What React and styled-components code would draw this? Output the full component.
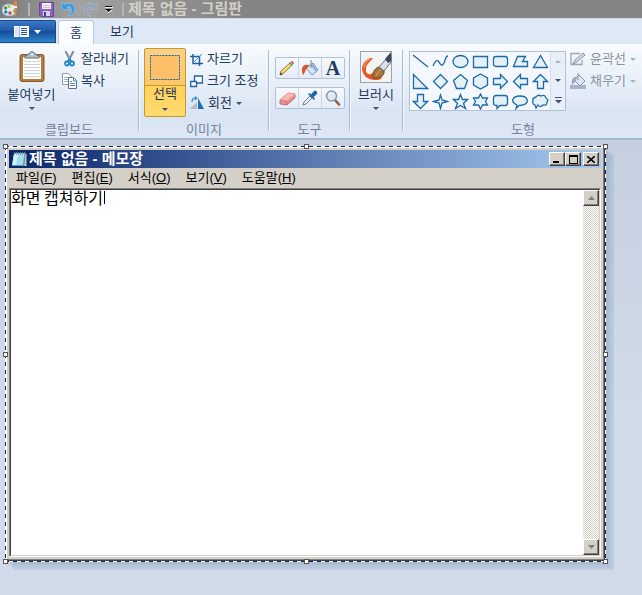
import styled, { createGlobalStyle, css } from 'styled-components';

const GlobalStyle = createGlobalStyle`
  * {
    box-sizing: border-box;
  }
  body {
    margin: 0;
    font-family: 'Liberation Sans', 'Noto Sans CJK KR', sans-serif;
    font-size: 13px;
    line-height: 16px;
    color: #1e395b;
  }
  button {
    font: inherit;
    color: inherit;
    padding: 0;
    border: none;
    background: none;
    white-space: nowrap;
  }
  svg {
    display: block;
    flex: none;
  }
`;

const Page = styled.div`
  display: flex;
  flex-direction: column;
  min-height: 100vh;
  overflow: hidden;
  background: #d0dae8;
`;

/* Paint title bar and tabs */
const TitleBar = styled.header`
  display: flex;
  align-items: center;
  height: 18px;
  padding-left: 2px;
  background: linear-gradient(90deg, #7c7c7c, #a2a2a2 80px, #848484 240px);
`;

const QuickAccess = styled.div`
  display: flex;
  align-items: center;
  gap: 7px;
  margin: 0 4px 0 10px;
  padding: 0 9px;
  border-left: 2px solid #b5b5b5;
  border-right: 2px solid #b5b5b5;
  height: 13px;
`;

const PaintTitle = styled.h1`
  margin: 0;
  font-size: 15px;
  font-weight: bold;
  line-height: 18px;
  color: #d4d0c8;
`;

const TabBar = styled.nav`
  display: flex;
  height: 26px;
  padding-top: 1px;
  background: #dfe8f5;
  border-top: 1px solid #cfd8e5;
`;

const FileButton = styled.button`
  display: flex;
  align-items: center;
  justify-content: center;
  gap: 5px;
  width: 56px;
  height: 23px;
  margin-right: 2px;
  border: 1px solid #1c4a8c;
  border-left: none;
  border-radius: 0 2px 0 0;
  background: linear-gradient(#3a78c3, #205ba9 45%, #174c99 50%, #2d86cb);
`;

const Tab = styled.button`
  padding: 0 16px;
  height: 24px;
  ${(props) =>
    props.$active &&
    css`
      padding: 0 11px;
      border: 1px solid #bac9db;
      border-bottom: none;
      border-radius: 3px 3px 0 0;
      background: #fafdff;
    `}
`;

/* Ribbon */
const Ribbon = styled.section`
  display: flex;
  background: linear-gradient(#f8fbfe, #e6eef8 45%, #d9e4f3 75%, #dde7f5);
  border-bottom: 2px solid #a3b8cf;
`;

const Group = styled.div`
  display: flex;
  flex-direction: column;
  flex: ${(props) => (props.$grow ? 1 : 'none')};
  width: ${(props) => props.$width || 'auto'};
  padding-top: 4px;
`;

const GroupBody = styled.div`
  display: flex;
  gap: 4px;
  min-height: 74px;
  padding: 0 5px;
`;

const GroupLabel = styled.div`
  text-align: center;
  color: #738399;
`;

const Divider = styled.div`
  width: 2px;
  margin: 6px 0 7px;
  background: #a9bcd4;
  border-right: 1px solid #f4f8fd;
`;

const BigButton = styled.button`
  display: flex;
  flex-direction: column;
  align-items: center;
  gap: 4px;
  width: ${(props) => props.$width};
  height: 69px;
  padding-top: 3px;
`;

const SelectButton = styled(BigButton)`
  gap: 6px;
  margin-left: -1px;
  border: 1px solid #c29b29;
  border-radius: 2px;
  background: linear-gradient(#fbd28a, #fdc769 36px, #c29b29 36px, #c29b29 37px, #ffd05c 37px, #ffdb70);
  padding-top: 6px;
`;

const CommandList = styled.div`
  display: flex;
  flex-direction: column;
`;

const Command = styled.button`
  display: flex;
  align-items: center;
  gap: 4px;
  height: 22px;
  color: ${(props) => (props.disabled ? '#8d93a0' : '#1e395b')};
`;

const ToolRows = styled.div`
  display: flex;
  flex-direction: column;
  gap: 8px;
  padding-top: 9px;
`;

const ToolRow = styled.div`
  display: flex;
  border: 1px solid #b1c0d6;
  border-radius: 2px;
  background: linear-gradient(#f6f9fd, #e4ecf7);
`;

const Tool = styled.button`
  display: flex;
  align-items: center;
  justify-content: center;
  width: 22px;
  height: 20px;
  & + & {
    width: 23px;
    border-left: 1px solid #c8d4e5;
  }
`;

const Letter = styled.span`
  font: bold 20px / 20px 'Liberation Serif', serif;
  color: #1f3a5f;
`;

const Gallery = styled.div`
  display: flex;
  height: 60px;
  margin-top: 3px;
  border: 1px solid #b1c0d6;
  background: #f4f7fc;
`;

const ShapeGrid = styled.div`
  display: grid;
  grid-template-columns: repeat(7, 20px);
  grid-template-rows: repeat(3, 20px);
  margin-top: -1px;
`;

const Shape = styled.button`
  display: flex;
  align-items: center;
  justify-content: center;
`;

const GalleryScroll = styled.div`
  display: flex;
  flex-direction: column;
  width: 15px;
  border-left: 1px solid #d3dcea;
  background: #e9eff8;
`;

const GalleryArrow = styled.button`
  display: flex;
  align-items: center;
  justify-content: center;
  flex: 1;
`;

/* Canvas with the pasted notepad window */
const Workspace = styled.main`
  display: flex;
  flex: 1;
  padding: 6px 36px 33px 5px;
  background: linear-gradient(#c5cfe0, #d0dae8 60%);
`;

const dash = '#0a246a 0 4px, #fff 4px 8px';

const Selection = styled.div`
  position: relative;
  display: flex;
  flex: 1;
  padding: 1px;
  background:
    repeating-linear-gradient(90deg, ${dash}) top / 100% 1px no-repeat,
    repeating-linear-gradient(90deg, ${dash}) bottom / 100% 1px no-repeat,
    repeating-linear-gradient(${dash}) left / 1px 100% no-repeat,
    repeating-linear-gradient(${dash}) right / 1px 100% no-repeat;
  box-shadow:
    2px 2px 0 rgba(130, 155, 190, 0.12),
    4px 4px 0 rgba(130, 155, 190, 0.12),
    6px 6px 0 rgba(130, 155, 190, 0.12),
    8px 8px 0 rgba(130, 155, 190, 0.2);
`;

const Handle = styled.span`
  position: absolute;
  left: ${(props) => props.$x};
  top: ${(props) => props.$y};
  width: 5px;
  height: 5px;
  margin: -2px;
  border: 1px solid #555;
  background: #fff;
`;

const Notepad = styled.article`
  display: flex;
  flex-direction: column;
  flex: 1;
  padding: 2px 3px 3px 2px;
  border: 1px solid;
  border-color: #fff #404040 #404040 #fff;
  box-shadow: inset -1px -1px 0 #808080;
  background: #d4d0c8;
  color: #000;
`;

const NotepadTitle = styled.div`
  display: flex;
  align-items: center;
  height: 18px;
  padding: 0 2px;
  background: linear-gradient(90deg, #0a246a, #a6caf0);
`;

const NotepadName = styled.h2`
  flex: 1;
  margin: 0 0 0 2px;
  font-size: 15px;
  line-height: 18px;
  color: #fff;
`;

const raised = css`
  border: 1px solid;
  border-color: #fff #404040 #404040 #fff;
  box-shadow: inset -1px -1px 0 #808080;
  background: #d4d0c8;
`;

const WindowButton = styled.button`
  ${raised}
  display: flex;
  align-items: center;
  justify-content: center;
  width: 16px;
  height: 14px;
  margin-left: ${(props) => (props.$apart ? '2px' : 0)};
`;

const MenuBar = styled.div`
  display: flex;
  gap: 15px;
  height: 20px;
  padding-left: 7px;
`;

const MenuItem = styled.button`
  line-height: 18px;
`;

const Editor = styled.div`
  position: relative;
  display: flex;
  flex: 1;
  border: 1px solid;
  border-color: #808080 #fff #fff #808080;
`;

const TextArea = styled.textarea`
  flex: 1;
  min-width: 0;
  padding: 0;
  border: 1px solid;
  border-color: #404040 transparent #d4d0c8 #404040;
  border-right: none;
  outline: none;
  resize: none;
  overflow: hidden;
  background: #fff;
  color: #000;
  font: 16px / 14px 'Noto Sans CJK KR', sans-serif;
`;

const Caret = styled.span`
  position: absolute;
  left: 94px;
  top: 2px;
  width: 1px;
  height: 13px;
  background: #000;
`;

const ScrollBar = styled.div`
  display: flex;
  flex-direction: column;
  justify-content: space-between;
  width: 17px;
  border: 1px solid #d4d0c8;
  border-top-color: #404040;
  border-left: none;
  background: repeating-conic-gradient(#d4d0c8 0 25%, #fff 0 50%) 0 0 / 2px 2px;
`;

const ScrollButton = styled.button`
  ${raised}
  display: flex;
  align-items: center;
  justify-content: center;
  height: 16px;
`;

function Arrow({ color = '#3c5470', up, size = 6 }) {
  const h = Math.ceil(size / 2);
  const d = up ? `M0 ${h}h${size}L${size / 2} 0z` : `M0 0h${size}L${size / 2} ${h}z`;
  return (
    <svg width={size} height={h} aria-hidden="true">
      <path d={d} fill={color} />
    </svg>
  );
}

const PaintIcon = () => (
  <svg width="16" height="16" viewBox="0 0 16 16">
    <path d="M6 3C2 3 0 6 0 9c0 4 3 6 7 6 3 0 6-1 6-3 0-1-2-1-2-2s3-1 3-3c0-3-4-4-8-4z" fill="#d9edf6" stroke="#7fa9c0" />
    <circle cx="3.5" cy="7" r="1.7" fill="#4c9b3c" />
    <circle cx="7" cy="5.5" r="1.6" fill="#e0b12c" />
    <circle cx="3.8" cy="11" r="1.7" fill="#2e7ad1" />
    <circle cx="8" cy="12" r="1.7" fill="#d5452b" />
    <path d="M12 0h3v5l-1 10h-1L12 5z" fill="#e68a28" />
    <path d="M12 5h3v2h-3z" fill="#eee" />
  </svg>
);

const SaveIcon = () => (
  <svg width="15" height="15" viewBox="0 0 15 15">
    <path d="M.5.5h14v14H2L.5 13z" fill="#8a63bd" stroke="#6a479f" />
    <path d="M3 1h9v6H3z" fill="#f5f0fa" />
    <path d="M4 3.500h7M4 5.500h7" stroke="#c9bcdd" />
    <path d="M4 9h7v5H4z" fill="#d8d0e5" />
    <path d="M5 10h2v4H5z" fill="#4e3684" />
  </svg>
);

const UndoIcon = ({ color, light, flip }) => (
  <svg width="15" height="16" viewBox="0 0 15 16">
    <path
      d="M0 1l1 7.500h7.500L6 6c3-1 5 1 4.500 4-.3 2-1.500 3.500-3.500 5 4-.5 7-3 7-7.500C14 3 8 .5 3.500 3.500z"
      fill={color}
      stroke={light}
      strokeWidth=".5"
      transform={flip ? 'translate(15 0) scale(-1 1)' : undefined}
    />
  </svg>
);

const CustomizeIcon = () => (
  <svg width="8" height="8" viewBox="0 0 8 8">
    <path d="M0 2h8v1H0zM0 5h8L4 8z" fill="#eee" />
    <path d="M0 1h7v1H0zM0 4h7L3.500 7z" fill="#111" />
  </svg>
);

const FileIcon = () => (
  <svg width="15" height="11" viewBox="0 0 15 11">
    <path d="M0 0h15v11H0z" fill="#fff" />
    <path d="M1 1h4v9H1z" fill="#dbe8f7" />
    <path d="M5.500 0v11" stroke="#9dbde0" />
    <path d="M7 2.500h6M7 4.500h6M7 6.500h6M7 8.500h6" stroke="#2a4f8a" />
  </svg>
);

const PasteIcon = () => (
  <svg width="26" height="32" viewBox="0 0 26 32">
    <rect x="1" y="3.500" width="24" height="27" rx="2" fill="#b37b3e" stroke="#8a5a27" />
    <path d="M4 6h18v22H4z" fill="#fdfdfd" />
    <path d="M5 10.500h16M5 13.500h16M5 16.500h16M5 19.500h16M5 22.500h16M5 25.500h16" stroke="#ccd1d8" />
    <path d="M6 7V5l4-2c1-3 5-3 6 0l4 2v2z" fill="#b8bec7" stroke="#606873" />
    <circle cx="13" cy="3.500" r="1" fill="#fff" />
  </svg>
);

const CutIcon = () => (
  <svg width="15" height="16" viewBox="0 0 15 16" fill="none">
    <path d="M3.500 0l5 10M11.500 0l-5 10" stroke="#7f8d9c" strokeWidth="2" />
    <path d="M7.500 8l-2 3M7.500 8l2 3" stroke="#1f87c5" strokeWidth="2" />
    <circle cx="5" cy="12.500" r="2" stroke="#1f87c5" strokeWidth="1.800" />
    <circle cx="10" cy="12.500" r="2" stroke="#1f87c5" strokeWidth="1.800" />
  </svg>
);

const CopyIcon = () => (
  <svg width="15" height="16" viewBox="0 0 15 16" fill="#fff">
    <path d="M.5.5h6l3 3v8h-9z" stroke="#8a9bb0" />
    <path d="M2 4.500h4M2 6.500h5M2 8.500h5" stroke="#9ab0cc" />
    <path d="M6.500 4.500h5l3 3v8h-8z" stroke="#5b6f88" />
    <path d="M11.500 5v3h3M8 8.500h2M8 10.500h5M8 12.500h5" stroke="#4d87c7" />
  </svg>
);

const SelectIcon = () => (
  <svg width="30" height="25" viewBox="0 0 30 25">
    <rect x=".5" y=".5" width="29" height="24" fill="#fdc069" stroke="#1b5fa8" strokeDasharray="2 1" />
  </svg>
);

const CropIcon = () => (
  <svg width="13" height="13" viewBox="0 0 13 13" fill="none">
    <path d="M3 1v9.500h10M0 3.500h9.500V13" stroke="#1a64a3" strokeWidth="1.500" />
    <path d="M3 10l9-9" stroke="#5b8cb5" />
  </svg>
);

const ResizeIcon = () => (
  <svg width="13" height="13" viewBox="0 0 13 13" fill="#fff">
    <path d="M4.500 1h8v7h-8z" stroke="#1a64a3" strokeWidth="1.300" />
    <path d="M.7 6.500h5.800v5H.7z" stroke="#1a64a3" strokeWidth="1.300" />
  </svg>
);

const RotateIcon = () => (
  <svg width="14" height="14" viewBox="0 0 14 14">
    <path d="M0 13l7-7v7z" fill="#b3bac4" />
    <path d="M8 13V2l6 11z" fill="#1f6fae" />
    <path d="M2 6c0-3 2-4 4-4" fill="none" stroke="#3b97d6" strokeWidth="1.500" />
    <path d="M5 0l3 2-3 2.500z" fill="#3b97d6" />
  </svg>
);

const PencilIcon = () => (
  <svg width="16" height="16" viewBox="0 0 16 16">
    <path d="M1 15l1-4 9-8 2 2-9 9z" fill="#f1c94f" stroke="#8b6d2c" strokeWidth=".8" />
    <path d="M3 12l9-8" stroke="#fff0a8" />
    <path d="M11.500 2L13 .8 15.200 3 14 4.500z" fill="#d45b62" />
    <path d="M10.500 2.500l3 3" stroke="#4b9156" strokeWidth="1.300" />
    <path d="M1 15l.7-2.500 1.800 1.800z" fill="#333" />
  </svg>
);

const BucketIcon = () => (
  <svg width="18" height="18" viewBox="0 0 18 18">
    <path d="M5 9l7-5 5 7-6 5z" fill="#d6e5f5" stroke="#6f93ba" />
    <path d="M12 4.500l4.500 6.500-2 1.500-5-6z" fill="#8db5df" />
    <path d="M10 1v8" stroke="#7b8794" />
    <path d="M8 6C4 5 1 7 1 10c0 2 0 4 1 6 2-1 2-6 5-8z" fill="#e2532c" />
  </svg>
);

const EraserIcon = () => (
  <svg width="17" height="15" viewBox="0 0 17 15">
    <path d="M1 9l8-7 7 1v4l-8 7-7-1z" fill="#e98e8b" stroke="#b56568" strokeWidth=".8" />
    <path d="M1 9l8-7 7 1-8 7z" fill="#f8b8b2" />
    <path d="M1 9l7 1v4" stroke="#c96f70" fill="none" strokeWidth=".7" />
  </svg>
);

const PickerIcon = () => (
  <svg width="16" height="16" viewBox="0 0 16 16">
    <path d="M1 15l1-3 6-6 2 2-6 6z" fill="#e8f1f9" stroke="#6d8299" />
    <path d="M6 4l6 6 1-1-1.500-2L15 4c1-2-1-4-3-3L9 4.500 7 3z" fill="#1f67ad" />
  </svg>
);

const MagnifierIcon = () => (
  <svg width="16" height="16" viewBox="0 0 16 16">
    <path d="M10.500 10.500l3.500 4" stroke="#8c5d45" strokeWidth="2.500" strokeLinecap="round" />
    <circle cx="6.500" cy="6" r="5" fill="#dcebf8" stroke="#8b97a6" strokeWidth="1.500" />
    <path d="M3.500 6c0-2 1-3 3-3" stroke="#fff" fill="none" />
  </svg>
);

const BrushIcon = () => (
  <svg width="32" height="32" viewBox="0 0 32 32">
    <rect x=".5" y=".5" width="31" height="31" fill="#f4f4f2" stroke="#9aa3ad" />
    <path d="M13 7C5 7 2 14 2 18c1 7 6 11 13 11 3 0 5 0 7-2l-8-6c-4 4-9 2-8-3 0-5 4-7 7-11z" fill="#e8542a" />
    <path d="M4 17c0-4 3-8 6-9" stroke="#f58e62" strokeWidth="1.500" fill="none" />
    <path d="M13 27c-1-7 3-11 7-11l4 4c1 5-5 8-11 7z" fill="#a8743f" stroke="#754a22" />
    <path d="M16 25c1-3 3-5 5-6" stroke="#d4a468" fill="none" />
    <path d="M19 16l8-9 4-3v7l-7 9z" fill="#dce1e8" stroke="#626c7a" />
    <path d="M25 8l6-7v9l-3 2z" fill="#38455c" />
  </svg>
);

const OutlineIcon = () => (
  <svg width="16" height="14" viewBox="0 0 16 14">
    <path d="M10 1.500H1v11h11V8" fill="none" stroke="#9aa7ba" strokeWidth="1.300" />
    <path d="M3 12l2-4 8-7 2 2-8 7z" fill="#d1d8e3" stroke="#8795aa" />
  </svg>
);

const FillIcon = () => (
  <svg width="16" height="16" viewBox="0 0 16 16">
    <path d="M0 12h16v4H0z" fill="#a5b2c7" />
    <path d="M4 7l5-5 6 6-5 5z" fill="#dfe5ee" stroke="#8795aa" />
    <path d="M8 0v7" stroke="#8795aa" />
    <path d="M7 4C3 3 1 7 2 12l4-4z" fill="#9caabd" />
  </svg>
);

const NotepadIcon = () => (
  <svg width="16" height="16" viewBox="0 0 16 16">
    <path d="M14 2l1.500 1v12H3z" fill="#d8c79a" />
    <path d="M3 2h11.500l-1 13H1z" fill="#4c9fb8" />
    <path d="M3 2.500h10.500L12 14H1z" fill="#a5dcea" />
    <path d="M3 3h4L5 14H1.500z" fill="#d2f0f6" />
    <path d="M3.500 1v3M5.500 1v3M7.500 1v3M9.500 1v3M11.500 1v3M13.500 1v3" stroke="#7e9aa5" strokeWidth=".8" />
  </svg>
);

const shapes = [
  ['선', 'M1 2l15 12'],
  ['곡선', 'M1 13c2-5 4-7 6-4s3 5 5 1 1-7 4-7'],
  ['타원', 'M1 8.500a7.500 6 0 1 0 15 0a7.500 6 0 1 0-15 0z'],
  ['직사각형', 'M1.500 3.500h14v11h-14z'],
  ['둥근 직사각형', 'M4 3.500h9q2.500 0 2.500 2.500v5q0 2.500-2.500 2.500H4q-2.500 0-2.500-2.500v-5q0-2.500 2.500-2.500z'],
  ['다각형', 'M5.500 3.500h8l-3 5h5v5H1.500z'],
  ['삼각형', 'M8.500 2.500l7 12h-14z'],
  ['직각 삼각형', 'M1.500 1.500v14h14z'],
  ['다이아몬드', 'M8.500 1.500l7 7-7 7-7-7z'],
  ['오각형', 'M8.500 1.500l7 6-3 8h-8l-3-8z'],
  ['육각형', 'M8.500 1l7 4v7l-7 4-7-4V5z'],
  ['오른쪽 화살표', 'M1.500 5.500h7v-4l7 7-7 7v-4h-7z'],
  ['왼쪽 화살표', 'M15.500 5.500h-7v-4l-7 7 7 7v-4h7z'],
  ['위쪽 화살표', 'M8.500 1.500l7 7h-4v7h-6v-7h-4z'],
  ['아래쪽 화살표', 'M8.500 15.500l7-7h-4v-7h-6v7h-4z'],
  ['사각 별', 'M8.500 2l1.500 5 5.500 1.500L10 10l-1.500 5.500L7 10 1.500 8.500 7 7z'],
  ['오각 별', 'M8.500 1.500l2 5h5l-4 4 2 5-5-3-5 3 2-5-4-4h5z'],
  ['육각 별', 'M8.500 1l2 4h5l-2 3.500 2 3.500h-5l-2 4-2-4h-5l2-3.500-2-3.500h5z'],
  ['둥근 사각 설명선', 'M4 2.500h9q2.500 0 2.500 2.500v5q0 2.500-2.500 2.500H8l-3 3v-3H4q-2.500 0-2.500-2.500V5q0-2.500 2.500-2.500z'],
  ['타원 설명선', 'M5 12C-2 9 0 3 8 3s10 7 3 9l-4 .500-3 3z'],
  ['구름 설명선', 'M4 4q2-3 5-1 4-2 5 2 3 2 1 4 0 4-4 3-3 3-5 0l-2 3-1-3q-3-1-2-4-1-3 3-4z'],
];

const ShapeIcon = ({ d }) => (
  <svg width="17" height="17" viewBox="0 0 17 17">
    <path d={d} fill={d.endsWith('z') ? '#e4f1f8' : 'none'} stroke="#1e69a8" strokeWidth="1.300" />
  </svg>
);

const menus = [
  ['파일', 'F'],
  ['편집', 'E'],
  ['서식', 'O'],
  ['보기', 'V'],
  ['도움말', 'H'],
];

const end = 'calc(100% - 1px)';
const handles = [
  ['0%', '0%'],
  ['50%', '0%'],
  [end, '0%'],
  ['0%', '50%'],
  [end, '50%'],
  ['0%', end],
  ['50%', end],
  [end, end],
];

function PaintRibbon() {
  return (
    <Ribbon>
      <Group $width="138px">
        <GroupBody>
          <BigButton $width="53px">
            <PasteIcon />
            붙여넣기
            <Arrow />
          </BigButton>
          <CommandList>
            <Command>
              <CutIcon />
              잘라내기
            </Command>
            <Command>
              <CopyIcon />
              복사
            </Command>
          </CommandList>
        </GroupBody>
        <GroupLabel>클립보드</GroupLabel>
      </Group>
      <Divider />
      <Group $width="128px">
        <GroupBody>
          <SelectButton $width="42px">
            <SelectIcon />
            선택
            <Arrow />
          </SelectButton>
          <CommandList>
            <Command>
              <CropIcon />
              자르기
            </Command>
            <Command>
              <ResizeIcon />
              크기 조정
            </Command>
            <Command>
              <RotateIcon />
              회전
              <Arrow />
            </Command>
          </CommandList>
        </GroupBody>
        <GroupLabel>이미지</GroupLabel>
      </Group>
      <Divider />
      <Group $width="79px">
        <GroupBody>
          <ToolRows>
            <ToolRow>
              <Tool aria-label="연필"><PencilIcon /></Tool>
              <Tool aria-label="색 채우기"><BucketIcon /></Tool>
              <Tool aria-label="텍스트"><Letter>A</Letter></Tool>
            </ToolRow>
            <ToolRow>
              <Tool aria-label="지우개"><EraserIcon /></Tool>
              <Tool aria-label="색 선택"><PickerIcon /></Tool>
              <Tool aria-label="돋보기"><MagnifierIcon /></Tool>
            </ToolRow>
          </ToolRows>
        </GroupBody>
        <GroupLabel>도구</GroupLabel>
      </Group>
      <Divider />
      <Group $width="51px">
        <GroupBody>
          <BigButton $width="40px">
            <BrushIcon />
            브러시
            <Arrow />
          </BigButton>
        </GroupBody>
      </Group>
      <Divider />
      <Group $grow>
        <GroupBody>
          <Gallery>
            <ShapeGrid>
              {shapes.map(([name, d]) => (
                <Shape key={name} aria-label={name}>
                  <ShapeIcon d={d} />
                </Shape>
              ))}
            </ShapeGrid>
            <GalleryScroll>
              <GalleryArrow aria-label="위로"><Arrow up color="#a5b1c3" /></GalleryArrow>
              <GalleryArrow aria-label="아래로"><Arrow /></GalleryArrow>
              <GalleryArrow aria-label="자세히">
                <svg width="7" height="7" viewBox="0 0 7 7">
                  <path d="M0 .5h7" stroke="#3c5470" />
                  <path d="M0 3h7L3.500 6.500z" fill="#3c5470" />
                </svg>
              </GalleryArrow>
            </GalleryScroll>
          </Gallery>
          <CommandList>
            <Command disabled>
              <OutlineIcon />
              윤곽선
              <Arrow color="#a5b1c3" />
            </Command>
            <Command disabled>
              <FillIcon />
              채우기
              <Arrow color="#a5b1c3" />
            </Command>
          </CommandList>
        </GroupBody>
        <GroupLabel>도형</GroupLabel>
      </Group>
    </Ribbon>
  );
}

function NotepadWindow() {
  return (
    <Notepad>
      <NotepadTitle>
        <NotepadIcon />
        <NotepadName>제목 없음 - 메모장</NotepadName>
        <WindowButton aria-label="최소화">
          <svg width="8" height="8"><path d="M0 6h6v2H0z" /></svg>
        </WindowButton>
        <WindowButton aria-label="최대화">
          <svg width="9" height="9">
            <path d="M.5 0v9M8.500 0v9M0 8.500h9" stroke="#000" />
            <path d="M0 0h9v2H0z" />
          </svg>
        </WindowButton>
        <WindowButton $apart aria-label="닫기">
          <svg width="8" height="7"><path d="M0 0l8 7M8 0L0 7" stroke="#000" strokeWidth="1.600" /></svg>
        </WindowButton>
      </NotepadTitle>
      <MenuBar>
        {menus.map(([label, hotkey]) => (
          <MenuItem key={hotkey}>
            {label}(<u>{hotkey}</u>)
          </MenuItem>
        ))}
      </MenuBar>
      <Editor>
        <TextArea aria-label="메모" defaultValue="화면 캡쳐하기" spellCheck={false} />
        <Caret />
        <ScrollBar>
          <ScrollButton aria-label="위로 스크롤"><Arrow up color="#808080" size={7} /></ScrollButton>
          <ScrollButton aria-label="아래로 스크롤"><Arrow color="#808080" size={7} /></ScrollButton>
        </ScrollBar>
      </Editor>
    </Notepad>
  );
}

export default function App() {
  return (
    <Page>
      <GlobalStyle />
      <TitleBar>
        <PaintIcon />
        <QuickAccess>
          <button aria-label="저장"><SaveIcon /></button>
          <button aria-label="실행 취소"><UndoIcon color="#3f9be0" light="#a5d4f5" /></button>
          <button aria-label="다시 실행"><UndoIcon flip color="#93a5b8" light="#b4c2cf" /></button>
          <button aria-label="사용자 지정"><CustomizeIcon /></button>
        </QuickAccess>
        <PaintTitle>제목 없음 - 그림판</PaintTitle>
      </TitleBar>
      <TabBar>
        <FileButton aria-label="파일">
          <FileIcon />
          <Arrow color="#fff" size={7} />
        </FileButton>
        <Tab $active>홈</Tab>
        <Tab>보기</Tab>
      </TabBar>
      <PaintRibbon />
      <Workspace>
        <Selection>
          <NotepadWindow />
          {handles.map(([x, y]) => (
            <Handle key={x + y} $x={x} $y={y} />
          ))}
        </Selection>
      </Workspace>
    </Page>
  );
}
